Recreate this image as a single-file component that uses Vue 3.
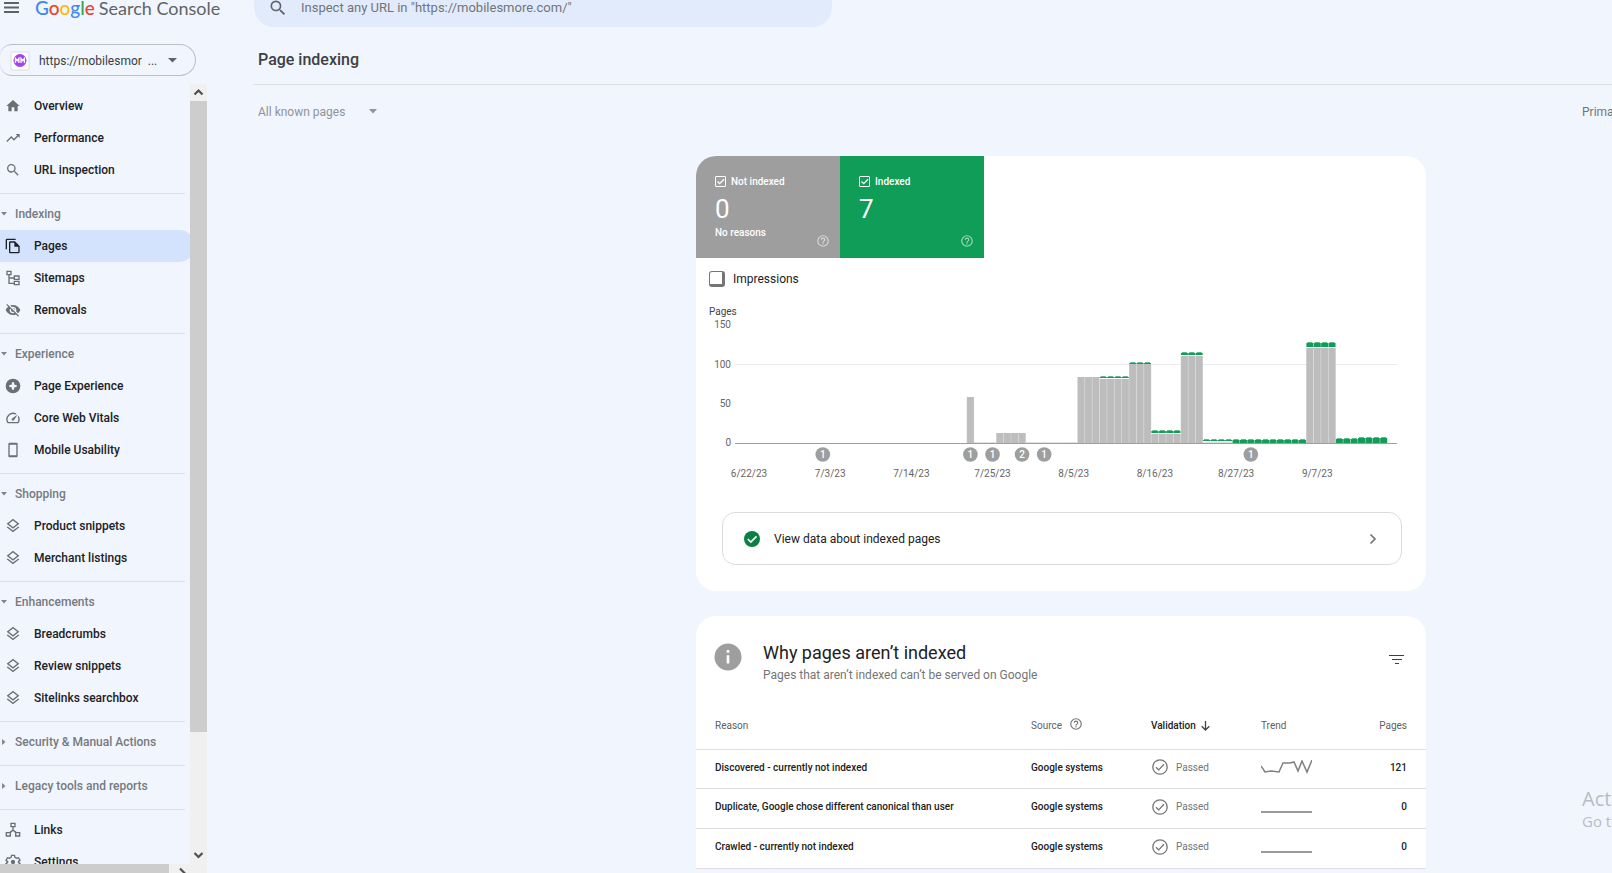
<script setup>
import { ref } from 'vue'

const groups = [
  { items: [
    { label: 'Overview', icon: 'home' },
    { label: 'Performance', icon: 'trend' },
    { label: 'URL inspection', icon: 'search' },
  ] },
  { title: 'Indexing', open: true, items: [
    { label: 'Pages', icon: 'pages', active: true },
    { label: 'Sitemaps', icon: 'sitemap' },
    { label: 'Removals', icon: 'hidden' },
  ] },
  { title: 'Experience', open: true, items: [
    { label: 'Page Experience', icon: 'experience' },
    { label: 'Core Web Vitals', icon: 'speed' },
    { label: 'Mobile Usability', icon: 'phone' },
  ] },
  { title: 'Shopping', open: true, items: [
    { label: 'Product snippets', icon: 'layers' },
    { label: 'Merchant listings', icon: 'layers' },
  ] },
  { title: 'Enhancements', open: true, items: [
    { label: 'Breadcrumbs', icon: 'layers' },
    { label: 'Review snippets', icon: 'layers' },
    { label: 'Sitelinks searchbox', icon: 'layers' },
  ] },
  { title: 'Security & Manual Actions', open: false, items: [] },
  { title: 'Legacy tools and reports', open: false, items: [] },
  { items: [
    { label: 'Links', icon: 'links' },
    { label: 'Settings', icon: 'settings' },
  ] },
]

const icons = {
  home: 'M10 20v-6h4v6h5v-8h3L12 3 2 12h3v8z',
  trend: 'M16 6l2.29 2.29-4.88 4.88-4-4L2 16.59 3.41 18l6-6 4 4 6.3-6.29L22 12V6z',
  search: 'M15.5 14h-.79l-.28-.27A6.47 6.47 0 0 0 16 9.5 6.5 6.5 0 1 0 9.5 16c1.61 0 3.09-.59 4.23-1.57l.27.28v.79l5 4.99L20.49 19zm-6 0a4.5 4.5 0 1 1 0-9 4.5 4.5 0 0 1 0 9z',
  pages: 'M16 1H3a2 2 0 0 0-2 2v14h2V3h13zM15 5H8a2 2 0 0 0-2 2v14c0 1.1.9 2 2 2h12a2 2 0 0 0 2-2V12zM8 21V7h6v6h6v8z',
  sitemap: 'M2 1v7h3v13h8v2h9v-7h-9v3H7v-6h6v2h9V8h-9v3H7V8h3V1zm2 2h4v3H4zm11 7h5v3h-5zm0 8h5v3h-5z',
  hidden: 'M12 7c2.76 0 5 2.24 5 5 0 .65-.13 1.26-.36 1.83l2.92 2.92c1.51-1.26 2.7-2.89 3.43-4.75-1.73-4.39-6-7.5-11-7.5-1.4 0-2.74.25-3.98.7l2.16 2.16C10.74 7.13 11.35 7 12 7zM2 4.27l2.28 2.28.46.46A11.8 11.8 0 0 0 1 12c1.73 4.39 6 7.5 11 7.5 1.55 0 3.03-.3 4.38-.84l.42.42L19.73 22 21 20.73 3.27 3zM7.53 9.8l1.55 1.55c-.05.21-.08.43-.08.65a3 3 0 0 0 3 3c.22 0 .44-.03.65-.08l1.55 1.55c-.67.33-1.41.53-2.2.53a5 5 0 0 1-5-5c0-.79.2-1.53.53-2.2zm4.31-.78l3.15 3.15.02-.16a3 3 0 0 0-3-3z',
  experience: 'M12 1a11 11 0 1 0 0 22 11 11 0 0 0 0-22zm-1.500 5.500h3l.5 3.500 3.500.5v3l-3.500.5-.5 3.500h-3l-.5-3.500-3.500-.5v-3l3.500-.5z',
  speed: 'M20.38 8.570l-1.23 1.85a8 8 0 0 1-.22 7.58H5.070A8 8 0 0 1 15.580 6.850l1.850-1.230A10 10 0 0 0 3.350 19a2 2 0 0 0 1.720 1h13.850a2 2 0 0 0 1.740-1 10 10 0 0 0-.270-10.440zM10.590 15.410a2 2 0 0 0 2.830 0l5.660-8.490-8.490 5.660a2 2 0 0 0 0 2.830z',
  phone: 'M17 1H7a2 2 0 0 0-2 2v18c0 1.100.9 2 2 2h10a2 2 0 0 0 2-2V3a2 2 0 0 0-2-2zm0 19H7V4h10z',
  layers: 'M12 1L2.500 8.500 12 16l9.500-7.500zm0 2.600l6.200 4.900L12 13.400 5.800 8.500zM4.100 12.700l-1.600 1.300L12 21.500l9.500-7.500-1.600-1.300L12 18.900z',
  links: 'M8 1v7h3v3.500L6.500 15H1v7h8v-6l3-2.500 3 2.500v6h8v-7h-5.500L13 11.500V8h3V1zm2 2h4v3h-4zM3 17h4v3H3zm14 0h4v3h-4z',
  settings: 'M9 1h6l.8 3.400 1.700 1 3.300-1 3 5.200-2.500 2.400 2.500 2.400-3 5.200-3.300-1-1.700 1L15 23H9l-.8-3.400-1.700-1-3.300 1-3-5.200L2.700 12 .2 9.600l3-5.200 3.300 1 1.700-1zM10.600 3L10 5.700 6.900 7.500l-2.700-.8L2.800 9.100 4.900 11v2l-2.100 1.900 1.400 2.400 2.700-.8 3.100 1.800.6 2.700h2.800l.6-2.700 3.100-1.800 2.700.8 1.400-2.400-2.100-1.900v-2l2.100-1.900-1.400-2.400-2.700.8L14 5.700 13.400 3zM12 8.800a3.200 3.200 0 1 0 0 6.400 3.200 3.200 0 0 0 0-6.400z',
  help: 'M11 18h2v-2h-2zm1-16a10 10 0 1 0 0 20 10 10 0 0 0 0-20zm0 18a8 8 0 1 1 0-16 8 8 0 0 1 0 16zm0-14a4 4 0 0 0-4 4h2a2 2 0 1 1 4 0c0 2-3 1.750-3 5h2c0-2.250 3-2.500 3-5a4 4 0 0 0-4-4z',
}

const notIndexed = ref(true)
const indexed = ref(true)
const impressions = ref(false)

// Runs of equal days: [days, grey px, green px, gap px]
const runs = [
  [30, 0, 0, 0], [1, 46, 0, 0], [3, 1, 0, 0], [4, 10, 0, 0], [7, 1, 0, 0], [3, 66, 0, 0],
  [4, 64, 1, 1], [3, 79, 1, 0], [4, 9, 2, 1], [3, 87, 2, 1], [4, 1, 1, 1], [10, 0, 3, 0],
  [4, 95, 4, 1], [3, 0, 4, 0], [4, 0, 5, 0],
]
const pitch = 7.38
const origin = 49.300
const base = 143
const bars = []
let day = 0
for (const [count, grey, green, gap] of runs) {
  for (let i = 0; i < count; i++) {
    if (grey || green) bars.push({ x: origin + day * pitch, grey, green, gap })
    day++
  }
}
const dayX = (d) => origin + (d + 0.5) * pitch
const ticks = [
  { v: 150, y: 28 }, { v: 100, y: 68 }, { v: 50, y: 107 }, { v: 0, y: 146 },
]
const dates = ['6/22/23', '7/3/23', '7/14/23', '7/25/23', '8/5/23', '8/16/23', '8/27/23', '9/7/23']
const markers = [[10, 1], [30, 1], [33, 1], [37, 2], [40, 1], [68, 1]]

const rows = [
  { reason: 'Discovered - currently not indexed', pages: 121, line: '0,6 4,12 10,11 18,12 22,3 29,3 33,2 37,11 41,1 46,12 51,0' },
  { reason: 'Duplicate, Google chose different canonical than user', pages: 0, line: '' },
  { reason: 'Crawled - currently not indexed', pages: 0, line: '' },
]
</script>

<template>
  <div class="app">
    <aside class="side">
      <div class="brand">
        <button class="bare" aria-label="Main menu">
          <svg width="16" height="12" viewBox="0 0 16 12"><path d="M0 1h15M0 5.500h15M0 10h15" stroke="#5f6368" stroke-width="2" /></svg>
        </button>
        <a class="logo" href="#"><span class="google"><span class="b">G</span><span class="r">o</span><span class="y">o</span><span class="b">g</span><span class="g">l</span><span class="r">e</span></span><span>Search Console</span></a>
      </div>
      <button class="property">
        <svg width="20" height="20" viewBox="0 0 20 20">
          <rect x="1" y="1" width="18" height="18" rx="1" fill="#fff" stroke="#dadce0" />
          <circle cx="10" cy="9.500" r="6.500" fill="#a142f4" />
          <path d="M5.500 12V7.500l1.700 2.200 1.700-2.200V12M11 12V7.500l1.700 2.200 1.700-2.200V12" fill="none" stroke="#fff" stroke-width="1.300" />
        </svg>
        <span class="prop-name">https://mobilesmor&nbsp; ...</span>
        <svg width="9" height="5" viewBox="0 0 9 5"><path d="M0 0h9L4.500 4.500z" fill="#5f6368" /></svg>
      </button>
      <div class="scroll">
        <nav class="nav">
          <section v-for="(group, n) in groups" :key="n" class="group">
            <button v-if="group.title" class="group-title">
              <svg width="6" height="6" viewBox="0 0 6 6"><path :d="group.open ? 'M0 1h6L3 4.500z' : 'M1 0v6l3.500-3z'" fill="#80868b" /></svg>
              {{ group.title }}
            </button>
            <a v-for="item in group.items" :key="item.label" href="#" class="item" :class="{ active: item.active }">
              <svg width="16" height="16" viewBox="0 0 24 24"><path :d="icons[item.icon]" fill-rule="evenodd" /></svg>
              {{ item.label }}
            </a>
          </section>
        </nav>
        <div class="vbar">
          <svg width="17" height="17" viewBox="0 0 17 17"><path d="M4.500 10.500l4-4 4 4" fill="none" stroke="#505050" stroke-width="2.200" /></svg>
          <div class="vthumb"></div>
          <div class="vrest"></div>
          <svg width="17" height="17" viewBox="0 0 17 17"><path d="M4.500 6l4 4 4-4" fill="none" stroke="#505050" stroke-width="2.200" /></svg>
        </div>
      </div>
      <div class="hbar">
        <div class="hthumb"></div>
        <svg width="9" height="9" viewBox="0 0 9 9"><path d="M1 4.500l5 5" fill="none" stroke="#505050" stroke-width="2.200" /></svg>
      </div>
    </aside>

    <main class="main">
      <label class="search">
        <svg width="20" height="20" viewBox="0 0 24 24"><path :d="icons.search" fill="#5f6368" /></svg>
        <input type="text" aria-label="Inspect any URL" placeholder="Inspect any URL in &quot;https://mobilesmore.com/&quot;" />
      </label>
      <div class="wide">
        <h1>Page indexing</h1>
        <div class="toolbar">
          <label class="filter">
            <select aria-label="Page filter"><option>All known pages</option></select>
            <svg width="8" height="5" viewBox="0 0 8 5"><path d="M0 0h8L4 4.500z" fill="#8f9499" /></svg>
          </label>
          <span class="crawler">Primary crawler: Smartphone</span>
        </div>

        <div class="cards">
          <section class="card">
            <div class="metrics">
              <div class="metric grey">
                <label><span class="box"><input v-model="notIndexed" type="checkbox" /><svg v-show="notIndexed" viewBox="0 0 11 11"><path d="M2.500 5.500l2.200 2.200L9 3.300" /></svg></span>Not indexed</label>
                <strong>0</strong>
                <small>No reasons</small>
                <svg class="help" viewBox="0 0 24 24"><path :d="icons.help" /></svg>
              </div>
              <div class="metric green">
                <label><span class="box"><input v-model="indexed" type="checkbox" /><svg v-show="indexed" viewBox="0 0 11 11"><path d="M2.500 5.500l2.200 2.200L9 3.300" /></svg></span>Indexed</label>
                <strong>7</strong>
                <svg class="help" viewBox="0 0 24 24"><path :d="icons.help" /></svg>
              </div>
            </div>
            <label class="impressions"><input v-model="impressions" type="checkbox" />Impressions</label>
            <svg class="chart" viewBox="0 0 730 190">
              <text x="13" y="15" class="axis-title">Pages</text>
              <text v-for="t in ticks" :key="t.v" x="35" :y="t.y" text-anchor="end">{{ t.v }}</text>
              <path d="M39 64.500H701" stroke="#ececec" />
              <g v-for="b in bars" :key="b.x">
                <rect v-if="b.grey" :x="b.x" :y="base - b.grey" width="7.400" :height="b.grey" :fill="b.grey > 1 ? '#d2d2d2' : '#e2e2e2'" />
                <rect v-if="b.grey > 1" :x="b.x + 0.400" :y="base - b.grey" width="6.600" :height="b.grey" fill="#bdbdbd" />
                <rect v-if="b.green" :x="b.x + 0.200" :y="base - b.grey - b.gap - b.green" width="7" :height="b.green" fill="#0f9d58" />
                <rect v-if="b.green" :x="b.x + 1.200" :y="base - b.grey - b.gap - b.green - 1" width="5" height="1" fill="#57bb8a" />
              </g>
              <path d="M39 143.500H701" stroke="#9e9e9e" />
              <g v-for="m in markers" :key="m[0]">
                <circle :cx="dayX(m[0])" cy="154.500" r="7.300" fill="#9e9e9e" />
                <text :x="dayX(m[0])" y="158" text-anchor="middle" class="mark">{{ m[1] }}</text>
              </g>
              <text v-for="(d, i) in dates" :key="d" :x="dayX(i * 11)" y="177" text-anchor="middle">{{ d }}</text>
            </svg>
            <a class="view" href="#">
              <svg width="18" height="18" viewBox="0 0 18 18"><circle cx="9" cy="9" r="8" fill="#0b8043" /><path d="M4.800 9l3 3 5.700-5.700" fill="none" stroke="#fff" stroke-width="1.700" /></svg>
              <span>View data about indexed pages</span>
              <svg width="8" height="12" viewBox="0 0 8 12"><path d="M1.500 1.500L6 6l-4.500 4.500" fill="none" stroke="#70757a" stroke-width="1.700" /></svg>
            </a>
          </section>

          <section class="card reasons">
            <header>
              <svg width="28" height="28" viewBox="0 0 28 28"><circle cx="14" cy="14" r="13.500" fill="#9e9e9e" /><path d="M14 7v2.700M14 12.300v8.200" stroke="#fff" stroke-width="2.600" /></svg>
              <div class="heads">
                <h2>Why pages aren’t indexed</h2>
                <p>Pages that aren’t indexed can’t be served on Google</p>
              </div>
              <button class="bare" aria-label="Filter">
                <svg width="16" height="10" viewBox="0 0 16 10"><path d="M0 .5h15M3 4.500h10M6 8.500h4" stroke="#3c4043" /></svg>
              </button>
            </header>
            <table>
              <thead>
                <tr>
                  <th class="c1">Reason</th>
                  <th class="c2">Source <svg class="th-help" viewBox="0 0 24 24"><path :d="icons.help" fill="#757575" /></svg></th>
                  <th class="c3">Validation <svg width="9" height="10" viewBox="0 0 9 10"><path d="M4.500 0v9M.7 5.200l3.800 3.800 3.800-3.800" fill="none" stroke="#424242" stroke-width="1.300" /></svg></th>
                  <th class="c4">Trend</th>
                  <th class="c5">Pages</th>
                </tr>
              </thead>
              <tbody>
                <tr v-for="r in rows" :key="r.reason">
                  <td>{{ r.reason }}</td>
                  <td>Google systems</td>
                  <td>
                    <span class="passed">
                      <svg width="18" height="16" viewBox="0 0 18 16"><circle cx="9" cy="8" r="7.200" /><path d="M5 8.200l2.700 2.700L13 5.300" /></svg>
                      Passed
                    </span>
                  </td>
                  <td>
                    <svg class="spark" width="51" height="14" viewBox="0 0 51 14">
                      <polyline v-if="r.line" :points="r.line" stroke="#808080" stroke-width="1.500" />
                      <path v-else d="M0 12h51" stroke="#9a9a9a" stroke-width="2" />
                    </svg>
                  </td>
                  <td class="c5">{{ r.pages }}</td>
                </tr>
              </tbody>
            </table>
          </section>
        </div>
      </div>
      <div class="watermark"><span class="big">Activate Windows</span><span>Go to Settings to activate Windows.</span></div>
    </main>
  </div>
</template>

<style>
html, body { height: 100%; }
body { overflow: hidden; background: #f1f5fd; }
</style>

<style scoped>
.app {
  display: flex;
  gap: 47px;
  height: 100vh;
  overflow: hidden;
  background: #f1f5fd;
  color: #202124;
  font-family: Roboto, "Liberation Sans", sans-serif;
  font-size: 12px;
}
.app * { box-sizing: border-box; }
svg { display: block; flex: none; }
a { color: inherit; text-decoration: none; }
button, input, select { font: inherit; color: inherit; border: 0; margin: 0; padding: 0; background: none; outline: 0; }

.side { flex: none; width: 207px; display: flex; flex-direction: column; }
.brand { display: flex; gap: 15px; height: 44px; padding-left: 4px; flex: none; white-space: nowrap; width: 240px; }
.brand .bare { align-self: flex-start; padding-top: 2px; }
.logo { display: flex; gap: 4px; align-items: baseline; align-self: flex-start; font: 18px/16px Lato, sans-serif; color: #5f6368; }
.google { font-size: 19px; font-weight: 500; }
.b { color: #4285f4; } .r { color: #ea4335; } .y { color: #fbbc04; } .g { color: #34a853; }
.property {
  display: flex; align-items: center; flex: none;
  width: 196px; height: 32px; margin-bottom: 8px; padding: 1px 0 0 10px;
  border: 1px solid #bdbfc4; border-left: 0; border-radius: 12px 16px 16px 12px;
  font-size: 12px; color: #3c4043; text-align: left;
}
.prop-name { margin: 0 11px 0 9px; white-space: nowrap; }
.scroll { display: flex; flex: 1; min-height: 0; }
.nav { flex: 1; min-width: 0; overflow: hidden; padding-top: 6px; }
.group { padding-bottom: 7px; }
.group + .group::before { content: ""; display: block; width: 185px; border-top: 1px solid #dcdfe4; margin-bottom: 4px; }
.group-title { display: flex; align-items: center; gap: 8px; height: 32px; padding-left: 1px; font-weight: 500; color: #757a80; white-space: nowrap; }
.item { display: flex; align-items: center; gap: 13px; width: 195px; height: 32px; padding-left: 5px; font-weight: 500; }
.item svg { fill: #6b6f74; }
.item.active { background: #d3e3fd; border-radius: 0 16px 16px 0; }
.item.active svg { fill: #202124; }
.vbar { display: flex; flex-direction: column; width: 17px; background: #f0f0f0; }
.vthumb { flex: 631; background: #cdcdcd; }
.vrest { flex: 115; }
.hbar { display: flex; gap: 10px; height: 9px; flex: none; background: #f0f0f0; }
.hthumb { width: 169px; background: #cdcdcd; }

.main { position: relative; flex: 1; min-width: 0; overflow: hidden; }
.search {
  display: flex; gap: 13px; width: 578px; max-width: 100%; height: 27px; padding: 0 13px 12px 14px;
  border-radius: 0 0 20px 20px; background: #e2ebfc;
}
.search svg { margin-top: -2px; }
.search input { flex: 1; height: 15px; font-size: 13px; }
.search input::placeholder { color: #70757a; opacity: 1; }
.wide { width: calc(100% + 256px); }
h1 { margin: 0; height: 58px; padding: 22px 0 0 4px; border-bottom: 1px solid #dcdfe1; font-size: 16px; line-height: 21px; font-weight: 500; color: #3c4043; }
.toolbar { display: flex; justify-content: space-between; align-items: center; height: 71px; padding: 0 0 18px 4px; color: #8f9499; }
.filter { display: flex; align-items: center; gap: 23px; }
.filter select { appearance: none; font-size: 12px; opacity: 1; }
.crawler { width: 286px; color: #757575; }
.cards { display: flex; flex-direction: column; gap: 25px; width: 730px; margin: 0 auto; }
.card { background: #fff; border-radius: 20px; overflow: hidden; }
.reasons { border-radius: 20px 20px 0 0; }
.metrics { display: flex; }
.metric { position: relative; width: 144px; height: 102px; padding: 19px 0 0 19px; color: #fff; display: flex; flex-direction: column; font-size: 10px; }
.metric.grey { background: #9e9e9e; }
.metric.green { background: #0f9d58; }
.metric label { display: flex; align-items: center; gap: 5px; height: 13px; font-weight: 500; }
.box { display: grid; width: 11px; height: 11px; }
.box > * { grid-area: 1 / 1; }
.box input { appearance: none; width: 11px; height: 11px; border: 1px solid #fff; border-radius: 1px; }
.box svg { width: 11px; height: 11px; fill: none; stroke: #fff; stroke-width: 1.300; pointer-events: none; }
.metric strong { margin-top: 4px; font-size: 26px; line-height: 34px; font-weight: 400; }
.metric small { margin-top: 1px; font-size: 10px; line-height: 12px; font-weight: 500; }
.help { position: absolute; right: 10px; bottom: 10px; width: 14px; height: 14px; fill: #fff; opacity: .6; }
.impressions { display: flex; align-items: center; gap: 8px; height: 42px; padding: 0 0 1px 13px; }
.impressions input { appearance: none; width: 16px; height: 16px; border: solid #757575; border-width: 1px 3px 3px 1px; border-radius: 3px; }
.chart { width: 100%; height: auto; font-size: 10px; fill: #666; }
.axis-title { fill: #444; }
.mark { fill: #fff; font-weight: 500; }
.view { display: flex; align-items: center; height: 53px; margin: 22px 24px 26px 26px; padding: 0 24px 0 20px; border: 1px solid #dadce0; border-radius: 13px; }
.view span { flex: 1; margin-left: 13px; }

.reasons header { display: flex; padding: 27px 21px 0 18px; height: 87px; }
.heads { flex: 1; margin-left: 21px; }
h2 { margin: 0; font-size: 18px; line-height: 20px; font-weight: 400; }
p { margin: 0; line-height: 24px; color: #757575; }
.bare { display: flex; cursor: pointer; }
.reasons .bare { align-self: flex-start; padding-top: 12px; }
table { width: 100%; border-collapse: collapse; table-layout: fixed; font-size: 10px; }
th { height: 46px; padding: 0; text-align: left; font-weight: 400; color: #616161; white-space: nowrap; }
th svg { display: inline-block; }
.th-help { width: 14px; height: 14px; margin: -4px 0 -4px 5px; vertical-align: 2px; }
.c1 { width: 335px; }
.c2 { width: 120px; }
.c3 { width: 110px; }
.c4 { width: 76px; }
th.c3 { font-weight: 500; color: #212121; }
th.c3 svg { margin-left: 3px; vertical-align: -2px; }
td { height: 40px; padding: 0 0 3px; font-weight: 500; color: #212121; white-space: nowrap; }
tbody tr:first-child td { height: 39px; }
tr > :first-child { padding-left: 19px; }
tr > :last-child { padding-right: 19px; text-align: right; }
tr { border-bottom: 1px solid #dedede; }
.passed { display: flex; align-items: center; gap: 7px; font-weight: 400; color: #757575; }
.passed svg { fill: none; stroke: #757575; stroke-width: 1.300; }
.spark { fill: none; }

.watermark { position: absolute; left: calc(100% - 30px); bottom: 42px; display: flex; flex-direction: column; white-space: nowrap; font: 15px/20px "Open Sans", sans-serif; color: #b9bcc3; }
.watermark .big { font-size: 20px; line-height: 24px; }
</style>
